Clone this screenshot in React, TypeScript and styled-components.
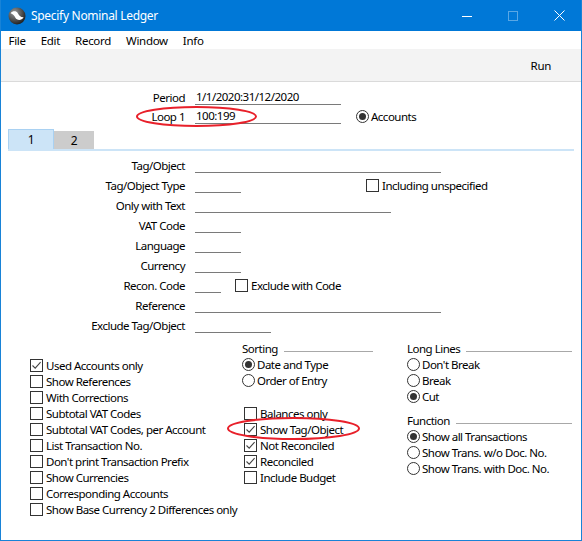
import React from "react"
import styled, { createGlobalStyle } from "styled-components"

const GlobalStyle = createGlobalStyle`
  html, body {
    margin: 0;
    padding: 0;
    background: #ffffff;
  }
  body {
    font-family: "Noto Sans", "Open Sans", sans-serif;
    font-size: 11.5px;
    letter-spacing: -0.5px;
    color: #000000;
  }
`

const Window = styled.div`
  width: 582px;
  height: 541px;
  box-sizing: border-box;
  border: 1px solid #1883d7;
  border-top: none;
  background: #ffffff;
  display: flex;
  flex-direction: column;
  overflow: hidden;
`

const TitleBar = styled.div`
  height: 31px;
  margin: 0 -1px;
  background: #0078d7;
  color: #ffffff;
  display: flex;
  align-items: center;
  padding-left: 8px;
  flex-shrink: 0;
`

const Title = styled.span`
  margin-left: 5px;
  font-size: 12px;
  letter-spacing: -0.3px;
  flex: 1;
`

const WinButton = styled.div<{ $dim?: boolean }>`
  width: 46px;
  height: 31px;
  display: flex;
  align-items: center;
  justify-content: center;
  opacity: ${(p) => (p.$dim ? 0.35 : 1)};
`

const MenuBar = styled.div`
  height: 18px;
  display: flex;
  align-items: center;
  flex-shrink: 0;
  font-size: 11.5px;
  letter-spacing: -0.3px;
`

const MenuItem = styled.span`
  padding: 0 7.5px;
`

const Toolbar = styled.div`
  height: 32px;
  background: #f3f3f3;
  border-bottom: 1px solid #dadada;
  display: flex;
  align-items: center;
  justify-content: flex-end;
  padding-right: 30px;
  flex-shrink: 0;
  letter-spacing: -0.3px;
`

const Content = styled.div`
  padding-top: 6px;
  flex: 1;
`

const Row = styled.div<{ $h: number }>`
  position: relative;
  height: ${(p) => p.$h}px;
  display: flex;
  align-items: center;
`

const Label = styled.span`
  width: 194px;
  box-sizing: border-box;
  padding-right: 10px;
  text-align: right;
  white-space: nowrap;
`

const Field = styled.div<{ $w: number }>`
  width: ${(p) => p.$w}px;
  height: 14px;
  line-height: 14px;
  border-bottom: 1px solid #7a7a7a;
  white-space: nowrap;
  padding-left: 1px;
  box-sizing: content-box;
`

const Trailing = styled.div<{ $gap: number }>`
  margin-left: ${(p) => p.$gap}px;
`

const TabBar = styled.div`
  margin: 3px 7px 0;
  height: 20px;
  display: flex;
  align-items: flex-end;
  border-bottom: 2px solid #cce4f7;
`

const Tab = styled.div<{ $active?: boolean; $w: number }>`
  width: ${(p) => p.$w}px;
  height: ${(p) => (p.$active ? 20 : 18)}px;
  box-sizing: border-box;
  background: ${(p) => (p.$active ? "#cce4f7" : "#cccccc")};
  border: ${(p) => (p.$active ? "1px solid #a9d1f2" : "none")};
  border-bottom: none;
  display: flex;
  align-items: center;
  justify-content: center;
  font-size: 12px;
`

const TabBody = styled.div`
  padding-top: 4px;
`

const Options = styled.div`
  margin-top: 5px;
  padding-left: 29px;
  display: grid;
  grid-template-columns: 212px 165px 165px;
`

const Column = styled.div<{ $top?: number; $right?: number }>`
  display: flex;
  flex-direction: column;
  padding-top: ${(p) => p.$top ?? 0}px;
  padding-right: ${(p) => p.$right ?? 0}px;
`

const GroupTitle = styled.div<{ $space?: number }>`
  height: 16px;
  display: flex;
  align-items: center;
  gap: 6px;
  margin-top: ${(p) => p.$space ?? 0}px;
  &::after {
    content: "";
    flex: 1;
    height: 1px;
    margin-top: 7px;
    background: #a8a8a8;
  }
`

const OptionRow = styled.div<{ $indent?: number; $space?: number }>`
  position: relative;
  height: 16px;
  display: flex;
  align-items: center;
  padding-left: ${(p) => p.$indent ?? 0}px;
  margin-top: ${(p) => p.$space ?? 0}px;
  white-space: nowrap;
`

const Box = styled.span`
  width: 13px;
  height: 13px;
  box-sizing: border-box;
  border: 1px solid #333333;
  background: #ffffff;
  margin-right: 3px;
  display: flex;
  align-items: center;
  justify-content: center;
  flex-shrink: 0;
`

const Circle = styled.span`
  width: 13px;
  height: 13px;
  box-sizing: border-box;
  border: 1px solid #333333;
  border-radius: 50%;
  margin-right: 2px;
  display: flex;
  align-items: center;
  justify-content: center;
  flex-shrink: 0;
`

const Dot = styled.span`
  width: 7px;
  height: 7px;
  border-radius: 50%;
  background: #333333;
`

const Ring = styled.svg<{ $x: number; $y: number; $w: number; $h: number }>`
  position: absolute;
  left: ${(p) => p.$x}px;
  top: ${(p) => p.$y}px;
  width: ${(p) => p.$w}px;
  height: ${(p) => p.$h}px;
  overflow: visible;
  pointer-events: none;
`

const Logo = () => (
  <svg width="18" height="18" viewBox="0 0 18 18">
    <defs>
      <radialGradient id="logoShade" cx="35%" cy="30%" r="75%">
        <stop offset="0" stopColor="#9a9a9a" />
        <stop offset="1" stopColor="#1c1c1c" />
      </radialGradient>
    </defs>
    <circle cx="9" cy="9" r="8.5" fill="url(#logoShade)" />
    <path
      d="M2.6 6.2 C4.6 3.6 8.4 3.6 9.8 6.2 C11 8.4 12.6 10.4 15.6 10.2 C13.6 14 8.8 13.6 7.4 10.8 C6.4 8.8 5 6.8 2.6 6.2 Z"
      fill="#ffffff"
    />
  </svg>
)

const RedRing = (props: { x: number; y: number; w: number; h: number }) => (
  <Ring $x={props.x} $y={props.y} $w={props.w} $h={props.h} viewBox={`0 0 ${props.w} ${props.h}`}>
    <ellipse
      cx={props.w / 2}
      cy={props.h / 2}
      rx={props.w / 2 - 1}
      ry={props.h / 2 - 1}
      fill="none"
      stroke="#e8202a"
      strokeWidth="2"
    />
  </Ring>
)

const Check = ({
  label,
  checked,
  indent,
  space,
  children,
}: {
  label: string
  checked?: boolean
  indent?: number
  space?: number
  children?: React.ReactNode
}) => (
  <OptionRow $indent={indent} $space={space}>
    <Box>
      {checked && (
        <svg width="11" height="11" viewBox="0 0 11 11">
          <path d="M1.5 5.5 L4.2 8.2 L9.6 2.2" fill="none" stroke="#444444" strokeWidth="1.1" />
        </svg>
      )}
    </Box>
    <span>{label}</span>
    {children}
  </OptionRow>
)

const Radio = ({ label, on, space }: { label: string; on?: boolean; space?: number }) => (
  <OptionRow $space={space}>
    <Circle>{on && <Dot />}</Circle>
    <span>{label}</span>
  </OptionRow>
)

const tabFields: { label: string; w: number; extra?: React.ReactNode }[] = [
  { label: "Tag/Object", w: 245 },
  {
    label: "Tag/Object Type",
    w: 45,
    extra: (
      <Trailing $gap={125}>
        <Check label="Including unspecified" />
      </Trailing>
    ),
  },
  { label: "Only with Text", w: 195 },
  { label: "VAT Code", w: 45 },
  { label: "Language", w: 45 },
  { label: "Currency", w: 45 },
  {
    label: "Recon. Code",
    w: 25,
    extra: (
      <Trailing $gap={14}>
        <Check label="Exclude with Code" />
      </Trailing>
    ),
  },
  { label: "Reference", w: 245 },
  { label: "Exclude Tag/Object", w: 75 },
]

const leftChecks: [string, boolean][] = [
  ["Used Accounts only", true],
  ["Show References", false],
  ["With Corrections", false],
  ["Subtotal VAT Codes", false],
  ["Subtotal VAT Codes, per Account", false],
  ["List Transaction No.", false],
  ["Don't print Transaction Prefix", false],
  ["Show Currencies", false],
  ["Corresponding Accounts", false],
  ["Show Base Currency 2 Differences only", false],
]

export default function App() {
  return (
    <>
      <GlobalStyle />
      <Window>
        <TitleBar>
          <Logo />
          <Title>Specify Nominal Ledger</Title>
          <WinButton>
            <svg width="10" height="10" viewBox="0 0 10 10">
              <path d="M0 5.5 H10" stroke="#ffffff" strokeWidth="1" />
            </svg>
          </WinButton>
          <WinButton $dim>
            <svg width="10" height="10" viewBox="0 0 10 10">
              <rect x="0.5" y="0.5" width="9" height="9" fill="none" stroke="#ffffff" strokeWidth="1" />
            </svg>
          </WinButton>
          <WinButton>
            <svg width="11" height="11" viewBox="0 0 11 11">
              <path d="M0.5 0.5 L10.5 10.5 M10.5 0.5 L0.5 10.5" stroke="#ffffff" strokeWidth="1" />
            </svg>
          </WinButton>
        </TitleBar>

        <MenuBar>
          <MenuItem>File</MenuItem>
          <MenuItem>Edit</MenuItem>
          <MenuItem>Record</MenuItem>
          <MenuItem>Window</MenuItem>
          <MenuItem>Info</MenuItem>
        </MenuBar>

        <Toolbar>Run</Toolbar>

        <Content>
          <Row $h={19}>
            <Label>Period</Label>
            <Field $w={145}>1/1/2020:31/12/2020</Field>
          </Row>
          <Row $h={19}>
            <Label>Loop 1</Label>
            <Field $w={145}>100:199</Field>
            <Trailing $gap={15}>
              <Radio label="Accounts" on />
            </Trailing>
            <RedRing x={135} y={-1} w={121} h={21} />
          </Row>

          <TabBar>
            <Tab $active $w={46}>1</Tab>
            <Tab $w={40}>2</Tab>
          </TabBar>

          <TabBody>
            {tabFields.map((f) => (
              <Row $h={20} key={f.label}>
                <Label>{f.label}</Label>
                <Field $w={f.w} />
                {f.extra}
              </Row>
            ))}
          </TabBody>

          <Options>
            <Column $top={17}>
              {leftChecks.map(([label, on]) => (
                <Check key={label} label={label} checked={on} />
              ))}
            </Column>

            <Column $right={34}>
              <GroupTitle>Sorting</GroupTitle>
              <Radio label="Date and Type" on />
              <Radio label="Order of Entry" />
              <Check label="Balances only" indent={2} space={17} />
              <Check label="Show Tag/Object" checked indent={2}>
                <RedRing x={-15} y={-4} w={133} h={23} />
              </Check>
              <Check label="Not Reconciled" checked indent={2} />
              <Check label="Reconciled" checked indent={2} />
              <Check label="Include Budget" indent={2} />
            </Column>

            <Column>
              <GroupTitle>Long Lines</GroupTitle>
              <Radio label="Don't Break" />
              <Radio label="Break" />
              <Radio label="Cut" on />
              <GroupTitle $space={8}>Function</GroupTitle>
              <Radio label="Show all Transactions" on />
              <Radio label="Show Trans. w/o Doc. No." />
              <Radio label="Show Trans. with Doc. No." />
            </Column>
          </Options>
        </Content>
      </Window>
    </>
  )
}
